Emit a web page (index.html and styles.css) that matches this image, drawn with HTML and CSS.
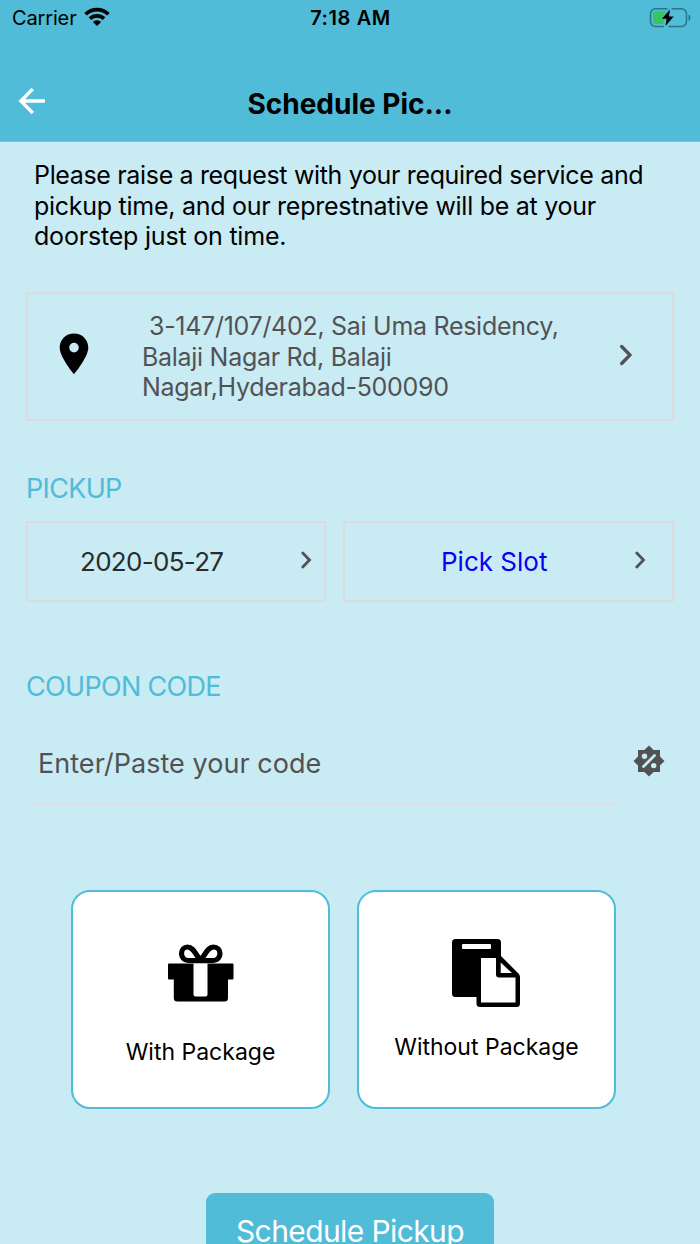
FILE: index.html
```html
<!DOCTYPE html>
<html lang="en">
<head>
<meta charset="utf-8">
<title>Schedule Pickup</title>
<link rel="stylesheet" href="styles.css">
</head>
<body>
<div class="screen">
  <header class="header">
    <div class="status">
      <div class="status-left">
        <span class="carrier">Carrier</span>
        <svg class="wifi" width="26" height="20" viewBox="0 0 26 20">
          <g fill="none" stroke="#000" stroke-width="3.7">
            <path d="M1.600 7.300A16.200 16.200 0 0 1 24.400 7.300"/>
            <path d="M5.900 11.700A10.200 10.200 0 0 1 20.100 11.700"/>
          </g>
          <path d="M13 19L8.900 14.900A5.800 5.800 0 0 1 17.100 14.900Z"/>
        </svg>
      </div>
      <span class="time">7:18 AM</span>
      <div class="status-right">
        <svg width="42" height="22" viewBox="0 0 42 22">
          <path d="M18.500 1.700H6.500a5 5 0 0 0-5 5v7.800a5 5 0 0 0 5 5H15M22.500 1.700h10a5 5 0 0 1 5 5v7.800a5 5 0 0 1-5 5H19.500" fill="none" stroke="#2d7386" stroke-width="1.500"/>
          <path d="M39.500 7.500v6.400q2-1 2-3.200t-2-3.200z" fill="#2d7386"/>
          <path d="M6.500 4.300H17.300L11.600 12.400H15.500L14 17H6.500Q4 17 4 14.500V6.800Q4 4.300 6.500 4.300Z" fill="#35c759"/>
          <path d="M21 2.500L12.800 11.700H17.500L16.500 19L24.700 9.600H19.900Z"/>
        </svg>
      </div>
    </div>
    <div class="navbar">
      <svg class="back" width="28" height="28" viewBox="0 0 28 28"><path d="M27 14H3M14.800 2L2.800 14L14.800 26" fill="none" stroke="#fff" stroke-width="3.300"/></svg>
      <h1 class="title">Schedule Pic...</h1>
    </div>
  </header>

  <main class="content">
    <p class="intro"><span class="i1">Please raise a request with your required service and</span><br><span class="i2">pickup time, and our represtnative will be at your</span><br><span class="i3">doorstep just on time.</span></p>

    <section class="box address">
      <svg class="pin" width="30" height="42" viewBox="0 0 30 42"><path fill-rule="evenodd" d="M15 .5C7 .5.700 6.700.700 14.500.700 24.500 15 41.200 15 41.200S29.300 24.500 29.300 14.500C29.300 6.700 23 .5 15 .5ZM15 9.800a4.800 4.800 0 1 1 0 9.600 4.800 4.800 0 0 1 0-9.600Z"/></svg>
      <p class="address-text"><span class="a1">3-147/107/402, Sai Uma Residency,</span><br><span class="a2">Balaji Nagar Rd, Balaji</span><br><span class="a3">Nagar,Hyderabad-500090</span></p>
      <svg class="chev-lg" width="12" height="22" viewBox="0 0 12 22"><path d="M1.700 2.500L10 11L1.700 19.500" class="chev"/></svg>
    </section>

    <h2 class="label pickup">PICKUP</h2>
    <div class="slots">
      <div class="box slot date">
        <span class="slot-text">2020-05-27</span>
        <svg class="chev-sm" width="11" height="18" viewBox="0 0 11 18"><path d="M1.800 2.100L8.500 9L1.800 15.900" class="chev"/></svg>
      </div>
      <div class="box slot time-slot">
        <span class="slot-text pick">Pick Slot</span>
        <svg class="chev-sm" width="11" height="18" viewBox="0 0 11 18"><path d="M1.800 2.100L8.500 9L1.800 15.900" class="chev"/></svg>
      </div>
    </div>

    <h2 class="label coupon">COUPON CODE</h2>
    <div class="code-row">
      <div class="field"><span class="placeholder">Enter/Paste your code</span></div>
      <svg class="percent" width="32" height="32" viewBox="0 0 32 32">
        <path fill="#525254" d="M16 .500L20.600 5H27V11.400L31.500 16L27 20.600V27H20.600L16 31.500L11.400 27H5V20.600L.500 16L5 11.400V5H11.400Z"/>
        <path d="M10.500 21.500L21.500 10.500" stroke="#c9ebf4" stroke-width="2.800" stroke-linecap="round"/>
        <circle cx="11.500" cy="11.300" r="2.700" fill="#c9ebf4"/><circle cx="20.700" cy="20.600" r="2.700" fill="#c9ebf4"/>
      </svg>
    </div>

    <div class="cards">
      <div class="card">
        <svg class="gift" width="66" height="58" viewBox="0 0 66 58">
          <path d="M1 19.500H64.500a1 1 0 0 1 1 1V34.500a1 1 0 0 1-1 1H60V54a3.500 3.500 0 0 1-3.500 3.500H9.300A3.500 3.500 0 0 1 5.800 54V35.500H1a1 1 0 0 1-1-1V20.500a1 1 0 0 1 1-1Z"/>
          <path d="M25.500 19.500H39.500V50.500a2 2 0 0 1-2 2H27.500a2 2 0 0 1-2-2Z" fill="#fff"/>
          <path d="M32.500 16.500C27.500 10 25 3 19.500 3C16 3 13.500 6 13.500 9.700S16.500 16.500 20 16.500ZM32.500 16.500C37.500 10 40 3 45.500 3C49.500 3 52 6 52 9.700S49 16.500 45.500 16.500Z" fill="#fff" stroke="#000" stroke-width="5.200" stroke-linejoin="round"/>
        </svg>
        <span class="card-text with">With Package</span>
      </div>
      <div class="card second">
        <svg class="paste" width="68" height="68" viewBox="0 0 68 68">
          <path d="M3.500 0H45.500A3.500 3.500 0 0 1 49 3.500V17L66.500 34.500Q68 36 68 38V64.500A3.500 3.500 0 0 1 64.500 68H28A3.500 3.500 0 0 1 24.500 64.500V58H3.500A3.500 3.500 0 0 1 0 54.500V3.500A3.500 3.500 0 0 1 3.500 0Z"/>
          <path fill="#fff" d="M11 5H38a1 1 0 0 1 1 1V9a1 1 0 0 1-1 1H11a1 1 0 0 1-1-1V6a1 1 0 0 1 1-1ZM29 19H44V35.500Q44 38.500 47 38.500H63.500V63.500H29ZM48.700 23.500V34H60Z"/>
        </svg>
        <span class="card-text without">Without Package</span>
      </div>
    </div>

    <button class="submit"><span class="submit-text">Schedule Pickup</span></button>
  </main>
</div>
</body>
</html>
```

FILE: styles.css
```css
* { box-sizing: border-box; }
body { margin: 0; }
.screen {
  width: 700px;
  height: 1244px;
  overflow: hidden;
  background: #c9ebf4;
  font-family: Inter, "Liberation Sans", sans-serif;
  color: #000;
}
h1, h2, p { margin: 0; font-weight: 400; }
span { white-space: nowrap; }
svg { display: block; flex: none; }
.chev { fill: none; stroke: #525254; stroke-width: 3.3; stroke-linecap: round; }
.chev-sm .chev { stroke-width: 2.8; }

.header {
  height: 142px;
  background: #50bcd8;
  border-bottom: 1px solid #91b9c4;
}
.status {
  display: grid;
  grid-template-columns: 1fr auto 1fr;
  align-items: center;
  height: 36px;
  padding: 0 9px 0 12px;
  font-size: 20px;
}
.status-left { display: flex; align-items: center; gap: 7px; }
.carrier { letter-spacing: -.15px; }
.wifi { margin-top: -3px; }
.status-right { display: flex; justify-content: flex-end; }
.time { margin-left: -2px; font-weight: 600; letter-spacing: .6px; }
.navbar {
  display: grid;
  grid-template-columns: 80px 1fr 80px;
  align-items: center;
  height: 105px;
  padding-top: 31px;
}
.back { margin: -7px 0 0 18px; }
.title { text-align: center; font-size: 28px; font-weight: 700; }

.content { padding: 18px 26px 0; }
.intro { padding-left: 8px; font-size: 25px; line-height: 30.5px; }
.i1 { letter-spacing: -.34px; }
.i2 { letter-spacing: -.27px; }
.i3 { letter-spacing: -.2px; }

.box { border: 2px solid #dcdcde; }
.address {
  display: flex;
  align-items: center;
  height: 129px;
  margin-top: 40px;
  padding: 0 40px 0 31px;
}
.address-text {
  flex: 1;
  padding: 2px 0 0 53px;
  font-size: 25px;
  line-height: 30.5px;
  letter-spacing: -.29px;
  color: #525254;
}
.pin { margin-top: -4px; }
.chev-lg { margin-top: -3px; }
.a1 { margin-left: 7px; }

.label { font-size: 27px; line-height: 34px; color: #50bcd8; letter-spacing: -.68px; }
.pickup { margin-top: 51px; }
.slots { display: flex; gap: 17px; margin-top: 15px; }
.slot { display: flex; align-items: center; height: 81px; }
.slot-text { flex: 1; font-size: 26px; letter-spacing: -.7px; color: #2b2b2d; }
.chev-sm { margin-top: -2px; }
.date { width: 300px; padding: 0 12px 0 52px; }
.time-slot { width: 331px; padding: 0 26px 0 96px; }
.slot .pick { color: #0a00f5; letter-spacing: 0; }

.coupon { margin-top: 68px; }
.code-row { display: flex; margin-top: 18px; padding-left: 4px; }
.field {
  display: flex;
  align-items: center;
  width: 588px;
  height: 83px;
  padding: 2px 0 0 8px;
  border-bottom: 1px solid #dcdcde;
}
.placeholder { font-size: 27px; letter-spacing: .04px; color: #525254; }
.percent { margin: 23px 0 0 15px; }

.cards { display: flex; gap: 27px; margin: 85px 0 0 45px; }
.card {
  display: flex;
  flex-direction: column;
  align-items: center;
  width: 259px;
  height: 219px;
  padding-top: 52px;
  border: 2px solid #50bcd8;
  border-radius: 19px;
  background: #fff;
}
.second { padding-top: 47px; }
.paste { margin-left: -1px; }
.card-text { font-size: 23px; line-height: 30px; }
.with { margin-top: 35px; }
.without { margin-top: 25px; }

.submit {
  display: flex;
  justify-content: center;
  width: 288px;
  height: 78px;
  margin: 84px auto 0;
  padding: 20px 0 0;
  border: 0;
  border-radius: 9px;
  background: #50bcd8;
  font-family: inherit;
}
.submit-text { font-size: 30px; line-height: 36px; letter-spacing: -.6px; color: #fff; }
```
